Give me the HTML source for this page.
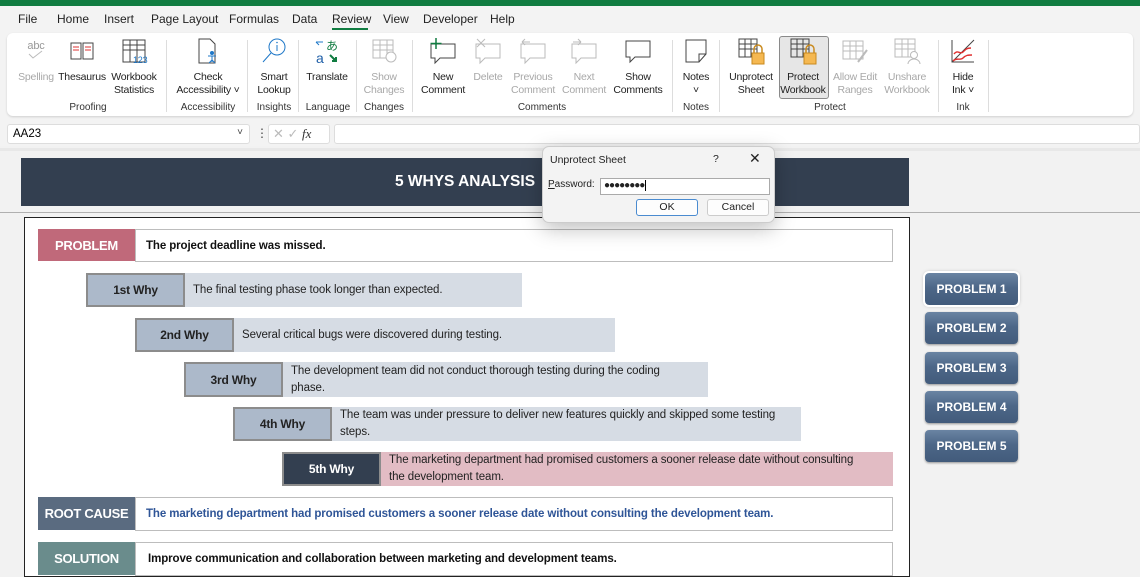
<!DOCTYPE html>
<html><head><meta charset="utf-8"><style>
*{margin:0;padding:0;box-sizing:border-box}
body{width:1140px;height:570px;overflow:hidden;position:relative;background:#f2f2f2;font-family:"Liberation Sans",sans-serif;}
.a{position:absolute}
.tab{position:absolute;top:12px;font-size:12px;color:#222}
.btn{position:absolute;top:36px;width:60px;text-align:center;font-size:10.5px;line-height:13px;color:#222;letter-spacing:-0.2px;white-space:nowrap}
.btn svg{display:block;margin:0 auto 5px;width:30px;height:30px}
.btn.g{color:#a8a8a8}
.grp{position:absolute;top:102px;font-size:10px;color:#333;transform:translateX(-50%)}
.sep{position:absolute;top:40px;width:1px;height:72px;background:#ddd}
.lab{position:absolute;font-weight:bold;font-size:13px;display:flex;align-items:center;justify-content:center;color:#fff;letter-spacing:-0.3px}
.why{position:absolute;background:#acb9ca;border:2px solid #8c8c8c;font-weight:bold;font-size:12px;color:#222;display:flex;align-items:center;justify-content:center;letter-spacing:-0.2px}
.wt{position:absolute;background:#d6dce4;font-size:11.5px;color:#222;padding:4px 8px;line-height:17px;display:flex;align-items:center;letter-spacing:-0.1px}
.tb{position:absolute;background:#fff;border:1px solid #bdbdbd;font-size:11.5px;font-weight:bold;color:#111;display:flex;align-items:center;padding-left:10px;letter-spacing:-0.1px}
.pb{position:absolute;left:925px;width:93px;height:32px;border-radius:4px;background:linear-gradient(#6a84a3,#4d6788 45%,#425b7b);color:#fff;font-weight:bold;font-size:12px;display:flex;align-items:center;justify-content:center;box-shadow:0 1px 2px rgba(0,0,0,.4)}
</style></head><body>
<div class="a" style="left:0;top:0;width:1140px;height:6px;background:#107c41"></div>
<div class="a" style="left:0;top:6px;width:1140px;height:140px;background:#f3f3f3"></div>
<div class="tab" style="left:18px">File</div>
<div class="tab" style="left:57px">Home</div>
<div class="tab" style="left:104px">Insert</div>
<div class="tab" style="left:151px">Page Layout</div>
<div class="tab" style="left:229px">Formulas</div>
<div class="tab" style="left:292px">Data</div>
<div class="tab" style="left:332px">Review</div>
<div class="a" style="left:332px;top:28px;width:36px;height:2px;background:#107c41"></div>
<div class="tab" style="left:383px">View</div>
<div class="tab" style="left:423px">Developer</div>
<div class="tab" style="left:490px">Help</div>
<div class="a" style="left:7px;top:33px;width:1126px;height:83px;background:#fff;border-radius:6px;box-shadow:0 1px 2px rgba(0,0,0,.15)"></div>

<div class="btn g" style="left:6px"><svg viewBox="0 0 30 30"><text x="15" y="13" font-size="11" text-anchor="middle" fill="#999" font-family="Liberation Sans">abc</text><path d="M8 18l4 4 9-7" stroke="#bbb" fill="none"/></svg>Spelling</div>
<div class="btn" style="left:52px"><svg viewBox="0 0 30 30"><path d="M4 7h10v16H4zM16 7h10v16H16z" fill="none" stroke="#444"/><path d="M6 11h6M6 14h6M18 11h6M18 14h6" stroke="#d33"/></svg>Thesaurus</div>
<div class="btn" style="left:104px"><svg viewBox="0 0 30 30"><path d="M4 4h22v22H4zM4 9h22M4 14h22M11 4v22M18 4v22" fill="none" stroke="#444"/><text x="14" y="27" font-size="9" fill="#1f78c8" font-family="Liberation Sans">123</text></svg>Workbook<br>Statistics</div>
<div class="sep" style="left:166px"></div>
<div class="btn" style="left:166px;width:84px"><svg viewBox="0 0 30 30"><path d="M6 3h11l5 5v19H6z" fill="none" stroke="#444"/><circle cx="19" cy="17" r="2" fill="#1f78c8"/><path d="M15 20h8M19 20v6M16 27l3-3 3 3" stroke="#1f78c8" fill="none"/></svg>Check<br>Accessibility ˅</div>
<div class="sep" style="left:247px"></div>
<div class="btn" style="left:244px"><svg viewBox="0 0 30 30"><circle cx="18" cy="11" r="8" fill="none" stroke="#1f78c8"/><path d="M12 17L4 26" stroke="#1f78c8"/><path d="M18 9v6" stroke="#1f78c8"/><circle cx="18" cy="6.5" r=".8" fill="#1f78c8"/></svg>Smart<br>Lookup</div>
<div class="sep" style="left:298px"></div>
<div class="btn" style="left:297px"><svg viewBox="0 0 30 30"><text x="4" y="27" font-size="14" fill="#1f5fa8" font-family="Liberation Sans">a</text><text x="14" y="14" font-size="12" fill="#107c41" font-family="Noto Sans CJK JP">あ</text><path d="M4 6h7M4 6l3 3" stroke="#1f78c8"/><path d="M18 19l6 6M20 25h4v-4" stroke="#107c41" stroke-width="2"/></svg>Translate</div>
<div class="sep" style="left:356px"></div>
<div class="btn g" style="left:354px"><svg viewBox="0 0 30 30"><path d="M4 4h20v18H4zM4 9h20M4 14h20M11 4v18M18 4v18" fill="none" stroke="#bbb"/><circle cx="22" cy="21" r="5" fill="#fff" stroke="#bbb"/></svg>Show<br>Changes</div>
<div class="sep" style="left:412px"></div>
<div class="btn" style="left:413px"><svg viewBox="0 0 30 30"><path d="M3 8h24v14H12l-5 5v-5H3z" fill="none" stroke="#444"/><path d="M8 2v11M2.5 7.5h11" stroke="#107c41" stroke-width="1.5"/></svg>New<br>Comment</div>
<div class="btn g" style="left:458px"><svg viewBox="0 0 30 30"><path d="M3 8h24v14H12l-5 5v-5H3z" fill="none" stroke="#bbb"/><path d="M4 3l8 8M12 3l-8 8" stroke="#bbb"/></svg>Delete</div>
<div class="btn g" style="left:503px"><svg viewBox="0 0 30 30"><path d="M3 8h24v14H12l-5 5v-5H3z" fill="none" stroke="#bbb"/><path d="M4 6h8M4 6l3-3M4 6l3 3" stroke="#bbb" fill="none"/></svg>Previous<br>Comment</div>
<div class="btn g" style="left:554px"><svg viewBox="0 0 30 30"><path d="M3 8h24v14H12l-5 5v-5H3z" fill="none" stroke="#bbb"/><path d="M4 6h8M12 6l-3-3M12 6l-3 3" stroke="#bbb" fill="none"/></svg>Next<br>Comment</div>
<div class="btn" style="left:608px"><svg viewBox="0 0 30 30"><path d="M3 5h24v16H12l-5 5v-5H3z" fill="none" stroke="#444"/></svg>Show<br>Comments</div>
<div class="sep" style="left:672px"></div>
<div class="btn" style="left:666px"><svg viewBox="0 0 30 30"><path d="M5 4h20v14l-7 8H5z M25 18h-7v8" fill="none" stroke="#444"/></svg>Notes<br>˅</div>
<div class="sep" style="left:719px"></div>
<div class="btn" style="left:721px"><svg viewBox="0 0 30 30"><path d="M3 3h18v18H3zM3 8h18M3 13h18M9 3v18M15 3v18" fill="none" stroke="#444"/><rect x="16" y="17" width="12" height="11" fill="#f5b851" stroke="#c98a1e"/><path d="M18 17v-4a4 4 0 0 1 8 0v4" fill="none" stroke="#c98a1e" stroke-width="1.5"/></svg>Unprotect<br>Sheet</div>
<div class="a" style="left:779px;top:36px;width:50px;height:63px;background:#e6e6e6;border:1px solid #8a8a8a;border-radius:3px"></div>
<div class="btn" style="left:773px"><svg viewBox="0 0 30 30"><path d="M3 3h18v18H3zM3 8h18M3 13h18M9 3v18M15 3v18" fill="none" stroke="#444"/><rect x="16" y="17" width="12" height="11" fill="#f5b851" stroke="#c98a1e"/><path d="M18 17v-4a4 4 0 0 1 8 0v4" fill="none" stroke="#c98a1e" stroke-width="1.5"/></svg>Protect<br>Workbook</div>
<div class="btn g" style="left:825px"><svg viewBox="0 0 30 30"><path d="M3 5h20v18H3zM3 10h20M3 15h20M10 5v18M16 5v18" fill="none" stroke="#bbb"/><path d="M18 26l9-12" stroke="#bbb" stroke-width="2"/></svg>Allow Edit<br>Ranges</div>
<div class="btn g" style="left:877px"><svg viewBox="0 0 30 30"><path d="M3 3h20v18H3zM3 8h20M3 13h20M10 3v18M16 3v18" fill="none" stroke="#bbb"/><circle cx="22" cy="19" r="3.5" fill="#fff" stroke="#bbb"/><path d="M16 28a6 5 0 0 1 12 0" fill="#fff" stroke="#bbb"/></svg>Unshare<br>Workbook</div>
<div class="sep" style="left:938px"></div>
<div class="btn" style="left:933px"><svg viewBox="0 0 30 30"><path d="M4 4v22h22" fill="none" stroke="#444"/><path d="M4 26L26 4" stroke="#444"/><path d="M6 18c4-5 6 1 9-2s4-4 8-4M5 25c4-4 7 0 10-3s5-3 9-3" stroke="#e03030" fill="none" stroke-width="1.4"/></svg>Hide<br>Ink ˅</div>
<div class="sep" style="left:988px"></div>
<div class="grp" style="left:88px">Proofing</div>
<div class="grp" style="left:208px">Accessibility</div>
<div class="grp" style="left:274px">Insights</div>
<div class="grp" style="left:328px">Language</div>
<div class="grp" style="left:384px">Changes</div>
<div class="grp" style="left:542px">Comments</div>
<div class="grp" style="left:696px">Notes</div>
<div class="grp" style="left:830px">Protect</div>
<div class="grp" style="left:963px">Ink</div>

<div class="a" style="left:7px;top:124px;width:243px;height:20px;background:#fff;border:1px solid #ddd;border-radius:3px;font-size:11.5px;padding:3px 5px">AA23<span style="position:absolute;right:6px;top:2px;font-size:10px;color:#444">˅</span></div>
<div class="a" style="left:256px;top:126px;font-size:12px;color:#444">⋮</div>
<div class="a" style="left:268px;top:124px;width:62px;height:20px;background:#fff;border:1px solid #ddd;border-radius:3px;font-size:13px;color:#bbb;padding:1px 4px">✕ ✓ <i style="color:#333;font-family:'Liberation Serif',serif">fx</i></div>
<div class="a" style="left:334px;top:124px;width:806px;height:20px;background:#fff;border:1px solid #ddd;border-radius:3px"></div>
<div class="a" style="left:0;top:148px;width:1140px;height:3px;background:#e8e8e8"></div>

<div class="a" style="left:21px;top:158px;width:888px;height:48px;background:#333f50;color:#fff;font-weight:bold;font-size:15.5px;display:flex;align-items:center;justify-content:center">5 WHYS ANALYSIS</div>
<div class="a" style="left:0;top:212px;width:1140px;height:1px;background:#b0b0b0"></div>
<div class="a" style="left:24px;top:217px;width:886px;height:360px;background:#fff;border:1px solid #222"></div>

<div class="lab" style="left:38px;top:229px;width:97px;height:32px;background:#c0697a">PROBLEM</div>
<div class="tb" style="left:135px;top:229px;width:758px;height:33px">The project deadline was missed.</div>

<div class="why" style="left:86px;top:273px;width:99px;height:34px">1st Why</div>
<div class="wt" style="left:185px;top:273px;width:337px;height:34px">The final testing phase took longer than expected.</div>
<div class="why" style="left:135px;top:318px;width:99px;height:34px">2nd Why</div>
<div class="wt" style="left:234px;top:318px;width:381px;height:34px">Several critical bugs were discovered during testing.</div>
<div class="why" style="left:184px;top:362px;width:99px;height:35px">3rd Why</div>
<div class="wt" style="left:283px;top:362px;width:425px;height:35px"><span>The development team did not conduct thorough testing during the coding<br>phase.</span></div>
<div class="why" style="left:233px;top:407px;width:99px;height:34px">4th Why</div>
<div class="wt" style="left:332px;top:407px;width:469px;height:34px"><span>The team was under pressure to deliver new features quickly and skipped some testing<br>steps.</span></div>
<div class="why" style="left:282px;top:452px;width:99px;height:34px;background:#333f50;color:#fff">5th Why</div>
<div class="wt" style="left:381px;top:452px;width:512px;height:34px;background:#e2bcc4"><span>The marketing department had promised customers a sooner release date without consulting<br>the development team.</span></div>

<div class="lab" style="left:38px;top:497px;width:97px;height:33px;background:#5a6b80">ROOT CAUSE</div>
<div class="tb" style="left:135px;top:497px;width:758px;height:34px;color:#2f5597">The marketing department had promised customers a sooner release date without consulting the development team.</div>
<div class="lab" style="left:38px;top:542px;width:97px;height:33px;background:#6a8c8c">SOLUTION</div>
<div class="tb" style="left:135px;top:542px;width:758px;height:34px;padding-left:12px">Improve communication and collaboration between marketing and development teams.</div>

<div class="pb" style="top:273px;outline:2px solid #fff;box-shadow:0 0 4px rgba(0,0,0,.5)">PROBLEM 1</div>
<div class="pb" style="top:312px">PROBLEM 2</div>
<div class="pb" style="top:352px">PROBLEM 3</div>
<div class="pb" style="top:391px">PROBLEM 4</div>
<div class="pb" style="top:430px">PROBLEM 5</div>

<div class="a" style="left:542px;top:146px;width:233px;height:77px;background:#f3f3f3;border:1px solid #ccc;border-radius:7px;box-shadow:0 6px 20px rgba(0,0,0,.25);font-size:10.5px;color:#222">
 <div class="a" style="left:7px;top:7px">Unprotect Sheet</div>
 <div class="a" style="left:170px;top:6px">?</div>
 <div class="a" style="left:206px;top:3px;font-size:14px">✕</div>
 <div class="a" style="left:5px;top:32px;font-size:10px"><u>P</u>assword:</div>
 <div class="a" style="left:57px;top:31px;width:170px;height:17px;background:#fff;border:1px solid #aaa;font-size:10px;padding:1px 3px;letter-spacing:-1px">●●●●●●●●<span style="border-left:1px solid #000;margin-left:1px"></span></div>
 <div class="a" style="left:93px;top:52px;width:62px;height:17px;background:#fdfdfd;border:1px solid #4a8bd0;border-radius:3px;text-align:center;line-height:15px">OK</div>
 <div class="a" style="left:164px;top:52px;width:62px;height:17px;background:#fdfdfd;border:1px solid #ccc;border-radius:3px;text-align:center;line-height:15px">Cancel</div>
</div>
</body></html>
